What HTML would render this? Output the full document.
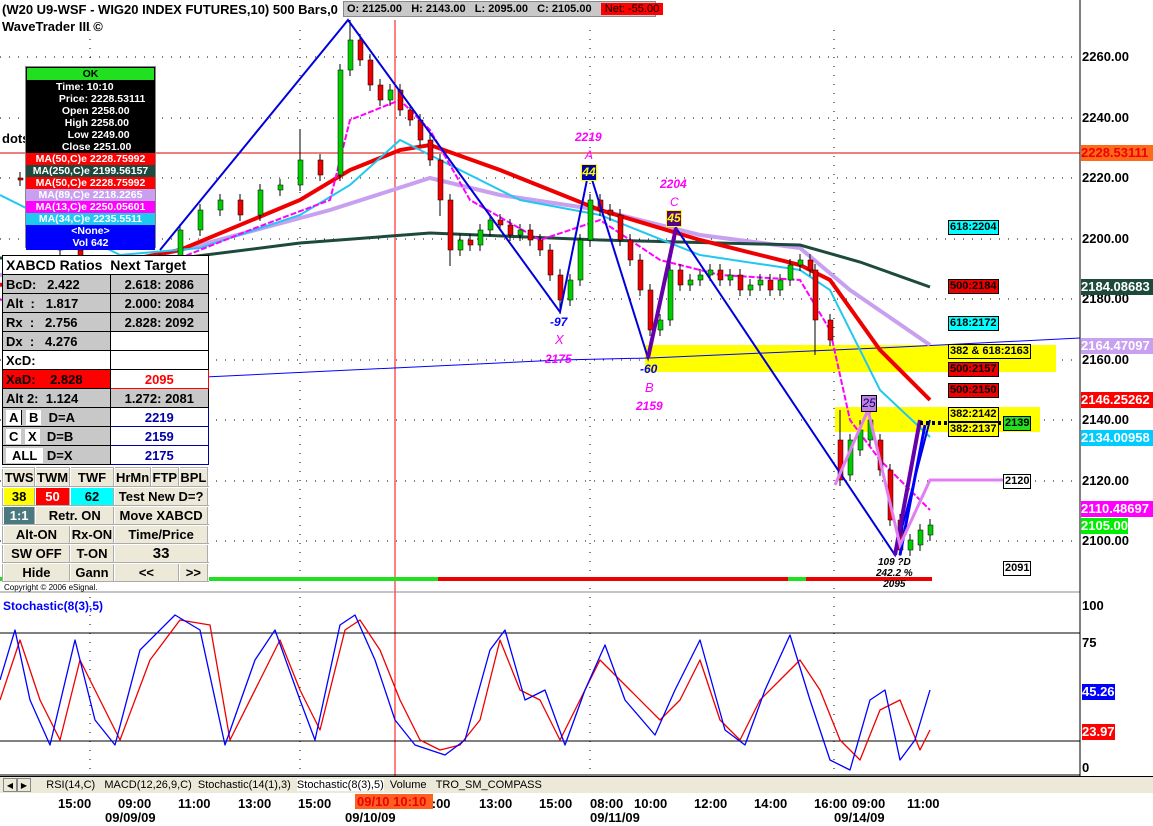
<!DOCTYPE html>
<html><head><meta charset="utf-8"><style>
*{margin:0;padding:0;box-sizing:border-box}
body{width:1153px;height:826px;overflow:hidden;background:#fff;font-family:"Liberation Sans",sans-serif;position:relative}
.a{position:absolute}
.t{font-weight:bold;font-size:13px;white-space:nowrap}
.lb{position:absolute;font-size:11px;font-weight:bold;border:1px solid #000;padding:0 1px;line-height:13px;white-space:nowrap}
.ax{position:absolute;left:1082px;font-size:13px;font-weight:bold;white-space:nowrap;line-height:16px}
.tb td{border:1px solid #000;font-size:13px;font-weight:bold;height:19px;padding:0 3px;white-space:nowrap}
.bt td{background:#ece9d8;border:2px outset #fff;font-size:13px;font-weight:bold;text-align:center;height:19px;white-space:nowrap;padding:0}
.ta{position:absolute;top:796px;font-size:13px;font-weight:bold}
</style></head><body>
<svg class="a" style="left:0;top:0" width="1153" height="826">
<g stroke="#000" stroke-width="1" stroke-dasharray="1,8">
<line x1="0" y1="57" x2="1075" y2="57"/><line x1="0" y1="118" x2="1075" y2="118"/><line x1="0" y1="178" x2="1075" y2="178"/><line x1="0" y1="239" x2="1075" y2="239"/><line x1="0" y1="299" x2="1075" y2="299"/><line x1="0" y1="360" x2="1075" y2="360"/><line x1="0" y1="420" x2="1075" y2="420"/><line x1="0" y1="481" x2="1075" y2="481"/><line x1="0" y1="541" x2="1075" y2="541"/>
<line x1="90" y1="30" x2="90" y2="792"/><line x1="300" y1="30" x2="300" y2="792"/><line x1="590" y1="30" x2="590" y2="792"/><line x1="834" y1="30" x2="834" y2="792"/>
</g>
<line x1="0" y1="153" x2="1080" y2="153" stroke="#d00"/>
<line x1="395" y1="20" x2="395" y2="795" stroke="#f00"/>
<rect x="645" y="345" width="411" height="27" fill="#ffff00"/>
<rect x="835" y="407" width="205" height="25" fill="#ffff00"/>
<polyline points="205,377 560,360 650,358 900,347 1080,338" fill="none" stroke="#00f" stroke-width="1"/>
<polyline points="0,275 100,270 200,245 330,210 430,178 500,195 600,210 700,235 800,248 850,290 930,345" fill="none" stroke="#c8a0f0" stroke-width="4"/>
<polyline points="0,258 150,262 300,243 430,233 600,240 800,245 860,262 930,287" fill="none" stroke="#1d4a3c" stroke-width="3"/>
<polyline points="0,285 180,250 300,200 350,170 400,150 430,145 500,170 600,210 700,240 800,265 830,280 880,350 930,400" fill="none" stroke="#e00" stroke-width="4"/>
<polyline points="0,195 120,255 200,248 300,215 350,185 400,140 440,160 520,200 600,215 700,255 800,270 830,290 880,390 930,437" fill="none" stroke="#20c8f0" stroke-width="2"/>
<polyline points="0,300 150,270 250,230 330,200 350,120 400,100 430,130 470,200 540,240 600,220 660,260 720,275 800,280 830,330 850,420 880,460 930,510" fill="none" stroke="#f0f" stroke-width="2" stroke-dasharray="6,2"/>
<path stroke="#000" stroke-width="1" fill="none" d="M20 172V186M40 174V236M60 224V256M80 244V271M100 259V276M120 264V291M140 269V291M160 254V281M180 224V266M200 204V236M220 194V216M240 194V221M260 184V221M280 179V196M300 130V191M320 154V181M340 64V181M350 20V76M360 34V66M370 54V91M380 79V106M390 84V106M400 84V116M410 104V126M420 114V146M430 134V166M440 154V216M450 194V266M460 234V256M470 234V251M480 224V251M490 214V236M500 214V231M510 219V241M520 224V241M530 224V246M540 234V256M550 244V281M560 269V314M570 274V306M580 234V286M590 194V246M600 194V216M610 204V221M620 209V246M630 234V266M640 254V296M650 284V336M660 314V336M670 264V326M680 264V291M690 274V291M700 269V286M710 264V281M720 264V286M730 269V286M740 269V296M750 279V296M760 274V291M770 274V296M780 274V296M790 259V286M800 254V271M810 254V276M815 264V355M830 314V346M840 410V486M850 434V481M860 420V456M870 400V446M880 434V476M890 464V526M900 514V556M910 534V556M920 524V551M930 519V541"/>
<g stroke="#000" stroke-width=".5">
<rect x="18" y="178" width="5" height="2" fill="#e00"/><rect x="38" y="180" width="5" height="50" fill="#e00"/><rect x="58" y="230" width="5" height="20" fill="#e00"/><rect x="78" y="250" width="5" height="15" fill="#e00"/><rect x="98" y="265" width="5" height="5" fill="#e00"/><rect x="118" y="270" width="5" height="15" fill="#e00"/><rect x="138" y="275" width="5" height="10" fill="#0c0"/><rect x="158" y="260" width="5" height="15" fill="#0c0"/><rect x="178" y="230" width="5" height="30" fill="#0c0"/><rect x="198" y="210" width="5" height="20" fill="#0c0"/><rect x="218" y="200" width="5" height="10" fill="#0c0"/><rect x="238" y="200" width="5" height="15" fill="#e00"/><rect x="258" y="190" width="5" height="25" fill="#0c0"/><rect x="278" y="185" width="5" height="5" fill="#0c0"/><rect x="298" y="160" width="5" height="25" fill="#0c0"/><rect x="318" y="160" width="5" height="15" fill="#e00"/><rect x="338" y="70" width="5" height="105" fill="#0c0"/><rect x="348" y="40" width="5" height="30" fill="#0c0"/><rect x="358" y="40" width="5" height="20" fill="#e00"/><rect x="368" y="60" width="5" height="25" fill="#e00"/><rect x="378" y="85" width="5" height="15" fill="#e00"/><rect x="388" y="90" width="5" height="10" fill="#0c0"/><rect x="398" y="90" width="5" height="20" fill="#e00"/><rect x="408" y="110" width="5" height="10" fill="#e00"/><rect x="418" y="120" width="5" height="20" fill="#e00"/><rect x="428" y="140" width="5" height="20" fill="#e00"/><rect x="438" y="160" width="5" height="40" fill="#e00"/><rect x="448" y="200" width="5" height="50" fill="#e00"/><rect x="458" y="240" width="5" height="10" fill="#0c0"/><rect x="468" y="240" width="5" height="5" fill="#e00"/><rect x="478" y="230" width="5" height="15" fill="#0c0"/><rect x="488" y="220" width="5" height="10" fill="#0c0"/><rect x="498" y="220" width="5" height="5" fill="#e00"/><rect x="508" y="225" width="5" height="10" fill="#e00"/><rect x="518" y="230" width="5" height="5" fill="#0c0"/><rect x="528" y="230" width="5" height="10" fill="#e00"/><rect x="538" y="240" width="5" height="10" fill="#e00"/><rect x="548" y="250" width="5" height="25" fill="#e00"/><rect x="558" y="275" width="5" height="25" fill="#e00"/><rect x="568" y="280" width="5" height="20" fill="#0c0"/><rect x="578" y="240" width="5" height="40" fill="#0c0"/><rect x="588" y="200" width="5" height="40" fill="#0c0"/><rect x="598" y="200" width="5" height="10" fill="#e00"/><rect x="608" y="210" width="5" height="5" fill="#e00"/><rect x="618" y="215" width="5" height="25" fill="#e00"/><rect x="628" y="240" width="5" height="20" fill="#e00"/><rect x="638" y="260" width="5" height="30" fill="#e00"/><rect x="648" y="290" width="5" height="40" fill="#e00"/><rect x="658" y="320" width="5" height="10" fill="#0c0"/><rect x="668" y="270" width="5" height="50" fill="#0c0"/><rect x="678" y="270" width="5" height="15" fill="#e00"/><rect x="688" y="280" width="5" height="5" fill="#0c0"/><rect x="698" y="275" width="5" height="5" fill="#0c0"/><rect x="708" y="270" width="5" height="5" fill="#0c0"/><rect x="718" y="270" width="5" height="10" fill="#e00"/><rect x="728" y="275" width="5" height="5" fill="#0c0"/><rect x="738" y="275" width="5" height="15" fill="#e00"/><rect x="748" y="285" width="5" height="5" fill="#0c0"/><rect x="758" y="280" width="5" height="5" fill="#0c0"/><rect x="768" y="280" width="5" height="10" fill="#e00"/><rect x="778" y="280" width="5" height="10" fill="#0c0"/><rect x="788" y="265" width="5" height="15" fill="#0c0"/><rect x="798" y="260" width="5" height="5" fill="#0c0"/><rect x="808" y="260" width="5" height="10" fill="#e00"/><rect x="813" y="270" width="5" height="50" fill="#e00"/><rect x="828" y="320" width="5" height="20" fill="#e00"/><rect x="838" y="440" width="5" height="40" fill="#e00"/><rect x="848" y="440" width="5" height="35" fill="#0c0"/><rect x="858" y="430" width="5" height="20" fill="#0c0"/><rect x="868" y="420" width="5" height="20" fill="#0c0"/><rect x="878" y="440" width="5" height="30" fill="#e00"/><rect x="888" y="470" width="5" height="50" fill="#e00"/><rect x="898" y="520" width="5" height="30" fill="#e00"/><rect x="908" y="540" width="5" height="10" fill="#0c0"/><rect x="918" y="530" width="5" height="15" fill="#0c0"/><rect x="928" y="525" width="5" height="10" fill="#0c0"/>
</g>
<polyline points="160,250 348,20 560,312 589,170 648,358 676,228 895,555 930,420" fill="none" stroke="#00d" stroke-width="2"/>
<polyline points="648,358 676,228" fill="none" stroke="#60a" stroke-width="4"/>
<polyline points="895,555 920,420" fill="none" stroke="#60a" stroke-width="4"/>
<polyline points="900,555 925,425" fill="none" stroke="#00f" stroke-width="3"/>
<polyline points="835,485 868,410 900,545 930,480 1003,480" fill="none" stroke="#e080f0" stroke-width="3"/>
<line x1="920" y1="423" x2="1003" y2="423" stroke="#000" stroke-width="4" stroke-dasharray="3,3"/>
<rect x="0" y="577" width="438" height="4" fill="#20e020"/><rect x="438" y="577" width="350" height="4" fill="#e00"/><rect x="788" y="577" width="18" height="4" fill="#20e020"/><rect x="806" y="577" width="126" height="4" fill="#e00"/>
<line x1="0" y1="592" x2="1080" y2="592" stroke="#888"/>
<line x1="1080" y1="0" x2="1080" y2="792" stroke="#000"/>
<line x1="0" y1="633" x2="1080" y2="633" stroke="#000"/><line x1="0" y1="741" x2="1080" y2="741" stroke="#000"/>
<polyline points="0,700 20,640 40,700 60,740 80,660 100,700 120,740 150,660 180,620 210,625 230,740 260,680 280,640 300,690 320,730 345,630 360,620 380,650 400,700 420,740 440,750 460,745 480,720 500,640 520,690 540,700 560,740 580,700 600,660 630,690 660,720 680,700 700,660 720,720 740,740 760,700 780,680 800,660 820,690 840,740 860,760 880,710 900,700 920,750 930,730" fill="none" stroke="#e00" stroke-width="1.3" stroke-linejoin="round"/>
<polyline points="0,680 15,630 30,700 50,745 75,640 95,720 115,745 140,650 175,615 200,630 225,745 255,660 275,630 300,700 315,740 340,625 355,615 375,660 395,720 415,745 445,755 465,740 490,650 505,630 525,700 545,690 565,745 585,690 605,645 625,700 655,735 675,690 700,640 725,730 745,745 765,690 790,635 810,700 830,760 850,770 870,700 885,690 900,760 915,740 930,690" fill="none" stroke="#00f" stroke-width="1.3" stroke-linejoin="round"/>
<line x1="0" y1="775" x2="1080" y2="775" stroke="#000"/>
</svg>

<div class="a t" style="left:2px;top:2px;font-size:13px">(W20 U9-WSF - WIG20 INDEX FUTURES,10) 500 Bars,0</div>
<div class="a t" style="left:2px;top:19px">WaveTrader III ©</div>
<div class="a" style="left:343px;top:1px;width:313px;height:16px;background:#c8c8c8;border:1px solid #888;font-size:11px;font-weight:bold;line-height:14px;padding-left:3px;white-space:nowrap">O: 2125.00&nbsp;&nbsp;&nbsp;H: 2143.00&nbsp;&nbsp;&nbsp;L: 2095.00&nbsp;&nbsp;&nbsp;C: 2105.00&nbsp;&nbsp;&nbsp;<span style="background:#f00;color:#000;font-weight:normal;padding:0 4px">Net: -55.00</span></div>
<div class="a t" style="left:2px;top:131px">dots</div>

<div class="a" style="left:25px;top:66px;width:131px;height:182px;background:#000;border:1px solid #888;font-size:10.5px;font-weight:bold;color:#fff;line-height:12px">
<div style="background:#20e020;color:#000;text-align:center;margin:1px">OK</div>
<div style="padding-left:30px">Time:&nbsp;10:10<br>&nbsp;Price:&nbsp;2228.53111<br>&nbsp;&nbsp;Open&nbsp;2258.00<br>&nbsp;&nbsp;&nbsp;High&nbsp;2258.00<br>&nbsp;&nbsp;&nbsp;&nbsp;Low&nbsp;2249.00<br>&nbsp;&nbsp;Close&nbsp;2251.00</div>
<div style="background:#f00;text-align:center">MA(50,C)e 2228.75992</div>
<div style="background:#1d4a3c;text-align:center">MA(250,C)e 2199.56157</div>
<div style="background:#f00;text-align:center">MA(50,C)e 2228.75992</div>
<div style="background:#c8a0f0;text-align:center">MA(89,C)e 2218.2265</div>
<div style="background:#f0f;text-align:center">MA(13,C)e 2250.05601</div>
<div style="background:#20c8f0;text-align:center">MA(34,C)e 2235.5511</div>
<div style="background:#00f;text-align:center;height:25px">&lt;None&gt;<br>Vol 642</div>
</div>

<table class="a tb" style="left:2px;top:255px;width:207px;border-collapse:collapse;background:#c8c8c8">
<tr style="background:#fff"><td colspan="2" style="font-size:14px">XABCD Ratios &nbsp;Next Target</td></tr>
<tr><td>BcD:&nbsp;&nbsp;&nbsp;2.422</td><td style="text-align:center">2.618: 2086</td></tr>
<tr><td>Alt&nbsp;&nbsp;:&nbsp;&nbsp;&nbsp;1.817</td><td style="text-align:center">2.000: 2084</td></tr>
<tr><td>Rx&nbsp;&nbsp;:&nbsp;&nbsp;&nbsp;2.756</td><td style="text-align:center">2.828: 2092</td></tr>
<tr><td>Dx&nbsp;&nbsp;:&nbsp;&nbsp;&nbsp;4.276</td><td style="background:#fff"></td></tr>
<tr><td style="background:#fff">XcD:</td><td style="background:#fff"></td></tr>
<tr><td style="background:#f00">XaD:&nbsp;&nbsp;&nbsp;&nbsp;2.828</td><td style="background:#fff;color:#f00;text-align:center;border-color:#f00">2095</td></tr>
<tr><td>Alt 2:&nbsp;&nbsp;1.124</td><td style="text-align:center">1.272: 2081</td></tr>
<tr><td><span style="background:#fff;padding:0 3px;border-right:1px solid #000">A</span> <span style="background:#fff;padding:0 3px">B</span>&nbsp; D=A</td><td style="background:#fff;color:#00a;text-align:center;border-color:#00a">2219</td></tr>
<tr><td><span style="background:#fff;padding:0 3px">C</span> <span style="background:#fff;padding:0 3px">X</span>&nbsp; D=B</td><td style="background:#fff;color:#00a;text-align:center;border-color:#00a">2159</td></tr>
<tr><td><span style="background:#fff;padding:0 6px">ALL</span>&nbsp;D=X</td><td style="background:#fff;color:#00a;text-align:center;border-color:#00a">2175</td></tr>
</table>
<table class="a bt" style="left:2px;top:467px;width:207px;border-collapse:collapse">
<tr><td>TWS</td><td>TWM</td><td>TWF</td><td>HrMn</td><td>FTP</td><td>BPL</td></tr>
<tr><td style="background:#ff0">38</td><td style="background:#f00;color:#fff">50</td><td style="background:#0ff">62</td><td colspan="3">Test New D=?</td></tr>
<tr><td style="background:#4a7a80;color:#fff">1:1</td><td colspan="2">Retr. ON</td><td colspan="3">Move XABCD</td></tr>
<tr><td colspan="2">Alt-ON</td><td>Rx-ON</td><td colspan="3">Time/Price</td></tr>
<tr><td colspan="2">SW OFF</td><td>T-ON</td><td colspan="3" style="font-size:15px">33</td></tr>
<tr><td colspan="2">Hide</td><td>Gann</td><td colspan="2">&lt;&lt;</td><td>&gt;&gt;</td></tr>
</table>
<div class="a" style="left:4px;top:583px;font-size:8px">Copyright © 2006 eSignal.</div>

<div class="a" style="left:575px;top:130px;color:#f0f;font-style:italic;font-size:12px;font-weight:bold">2219</div>
<div class="a" style="left:585px;top:148px;color:#f0f;font-style:italic;font-size:12px">A</div>
<div class="a" style="left:581px;top:164px;width:16px;height:17px;background:#00a;border:1px solid #ff0;color:#ff0;font-size:12px;font-weight:bold;font-style:italic;text-align:center">44</div>
<div class="a" style="left:660px;top:177px;color:#f0f;font-style:italic;font-size:12px;font-weight:bold">2204</div>
<div class="a" style="left:670px;top:195px;color:#f0f;font-style:italic;font-size:12px">C</div>
<div class="a" style="left:666px;top:210px;width:16px;height:17px;background:#508;border:1px solid #ff0;color:#ff0;font-size:12px;font-weight:bold;font-style:italic;text-align:center">45</div>
<div class="a" style="left:550px;top:315px;color:#00f;font-style:italic;font-size:12px;font-weight:bold">-97</div>
<div class="a" style="left:555px;top:332px;color:#f0f;font-style:italic;font-size:13px">X</div>
<div class="a" style="left:545px;top:352px;color:#f0f;font-style:italic;font-size:12px;font-weight:bold">2175</div>
<div class="a" style="left:640px;top:362px;color:#00f;font-style:italic;font-size:12px;font-weight:bold">-60</div>
<div class="a" style="left:645px;top:380px;color:#f0f;font-style:italic;font-size:13px">B</div>
<div class="a" style="left:636px;top:399px;color:#f0f;font-style:italic;font-size:12px;font-weight:bold">2159</div>
<div class="a" style="left:861px;top:395px;width:16px;height:17px;background:#c080e0;border:1px solid #000;color:#006;font-size:12px;font-style:italic;text-align:center">25</div>
<div class="a" style="left:876px;top:557px;font-style:italic;font-size:10px;font-weight:bold;text-align:center;line-height:11px">109 ?D<br>242.2 %<br>2095</div>

<div class="lb" style="left:948px;top:220px;background:#0ff">618:2204</div>
<div class="lb" style="left:948px;top:279px;background:#e00">500:2184</div>
<div class="lb" style="left:948px;top:316px;background:#0ff">618:2172</div>
<div class="lb" style="left:948px;top:344px;background:#ff0">382 &amp; 618:2163</div>
<div class="lb" style="left:948px;top:362px;background:#e00">500:2157</div>
<div class="lb" style="left:948px;top:383px;background:#e00">500:2150</div>
<div class="lb" style="left:948px;top:407px;background:#ff0">382:2142</div>
<div class="lb" style="left:948px;top:422px;background:#ff0">382:2137</div>
<div class="lb" style="left:1003px;top:416px;background:#20e020">2139</div>
<div class="lb" style="left:1003px;top:474px;background:#fff">2120</div>
<div class="lb" style="left:1003px;top:561px;background:#fff">2091</div>

<div class="ax" style="top:49px">2260.00</div>
<div class="ax" style="top:110px">2240.00</div>
<div class="ax" style="top:170px">2220.00</div>
<div class="ax" style="top:231px">2200.00</div>
<div class="ax" style="top:291px">2180.00</div>
<div class="ax" style="top:352px">2160.00</div>
<div class="ax" style="top:412px">2140.00</div>
<div class="ax" style="top:473px">2120.00</div>
<div class="ax" style="top:533px">2100.00</div>
<div class="ax" style="top:145px;left:1081px;background:#ff6a1a;color:#e00;width:72px">2228.53111</div>
<div class="ax" style="top:279px;left:1081px;background:#1d4a3c;color:#fff;width:72px">2184.08683</div>
<div class="ax" style="top:338px;left:1081px;background:#c8a0f0;color:#fff;width:72px">2164.47097</div>
<div class="ax" style="top:392px;left:1081px;background:#f00;color:#fff;width:72px">2146.25262</div>
<div class="ax" style="top:430px;left:1081px;background:#0cf;color:#fff;width:72px">2134.00958</div>
<div class="ax" style="top:501px;left:1081px;background:#f0f;color:#fff;width:72px">2110.48697</div>
<div class="ax" style="top:518px;left:1081px;background:#0e0;color:#fff">2105.00</div>

<div class="a" style="left:3px;top:599px;color:#00f;font-size:12px;font-weight:bold">Stochastic(8(3),5)</div>
<div class="ax" style="top:598px">100</div>
<div class="ax" style="top:635px">75</div>
<div class="ax" style="top:760px">0</div>
<div class="ax" style="top:684px;background:#00f;color:#fff">45.26</div>
<div class="ax" style="top:724px;background:#f00;color:#fff">23.97</div>

<div class="a" style="left:0;top:776px;width:1153px;height:17px;background:#ece9d8;border-top:1px solid #000;font-size:11px;line-height:16px;white-space:nowrap">
<span style="display:inline-block;width:14px;height:14px;border:1px solid #888;margin:1px 0 0 3px;font-size:8px;text-align:center;line-height:13px">◀</span><span style="display:inline-block;width:14px;height:14px;border:1px solid #888;font-size:8px;text-align:center;line-height:13px">▶</span>
&nbsp;&nbsp;&nbsp;&nbsp;RSI(14,C) &nbsp;&nbsp;MACD(12,26,9,C) &nbsp;Stochastic(14(1),3) &nbsp;<span style="background:#fff">Stochastic(8(3),5)</span> &nbsp;Volume &nbsp;&nbsp;TRO_SM_COMPASS</div>
<div class="a" style="left:0;top:793px;width:1153px;height:33px;background:#fff"></div>
<div class="ta" style="left:58px">15:00</div><div class="ta" style="left:118px">09:00</div><div class="ta" style="left:178px">11:00</div><div class="ta" style="left:238px">13:00</div><div class="ta" style="left:298px">15:00</div>
<div class="ta" style="left:418px">11:00</div>
<div class="ta" style="left:355px;background:#ff6020;color:#e00;padding:0 2px;top:794px;width:78px">09/10 10:10</div>
<div class="ta" style="left:479px">13:00</div><div class="ta" style="left:539px">15:00</div><div class="ta" style="left:590px">08:00</div><div class="ta" style="left:634px">10:00</div><div class="ta" style="left:694px">12:00</div><div class="ta" style="left:754px">14:00</div><div class="ta" style="left:814px">16:00</div><div class="ta" style="left:852px">09:00</div><div class="ta" style="left:907px">11:00</div>
<div class="ta" style="left:105px;top:810px">09/09/09</div><div class="ta" style="left:345px;top:810px">09/10/09</div><div class="ta" style="left:590px;top:810px">09/11/09</div><div class="ta" style="left:834px;top:810px">09/14/09</div>
</body></html>
